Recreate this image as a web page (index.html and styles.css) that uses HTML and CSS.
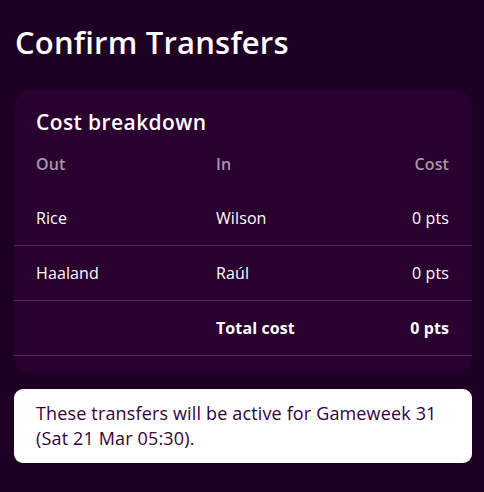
FILE: index.html
```html
<!DOCTYPE html>
<html>
<head>
<meta charset="utf-8">
<link rel="stylesheet" href="styles.css">
</head>
<body>
<main class="page">
  <h1 class="title">Confirm Transfers</h1>
  <section class="card">
    <h2 class="card-title">Cost breakdown</h2>
    <div class="row head">
      <span>Out</span><span>In</span><span class="cost">Cost</span>
    </div>
    <div class="row line">
      <span>Rice</span><span>Wilson</span><span class="cost">0 pts</span>
    </div>
    <div class="row line">
      <span>Haaland</span><span>Raúl</span><span class="cost">0 pts</span>
    </div>
    <div class="row line total">
      <span></span><span>Total cost</span><span class="cost">0 pts</span>
    </div>
  </section>
  <p class="notice">These transfers will be active for Gameweek 31 (Sat 21 Mar 05:30).</p>
</main>
</body>
</html>
```
FILE: styles.css
```css
html, body {
  margin: 0;
  background: #1e0024;
}
body {
  font-family: "Open Sans", "Noto Sans", sans-serif;
  color: #ffffff;
}
.page {
  padding: 22px 12px 0 14px;
  display: flex;
  flex-direction: column;
}
.title {
  margin: 0 0 0 1px;
  font-size: 31px;
  font-weight: 600;
  line-height: 40px;
  letter-spacing: 0.2px;
}
.card {
  margin-top: 28px;
  background: #29002f;
  border-radius: 18px;
  padding: 18px 0 17px;
}
.card-title {
  margin: 0 0 0 22px;
  font-size: 21px;
  font-weight: 600;
  line-height: 28px;
  letter-spacing: 0.4px;
}
.row {
  display: grid;
  grid-template-columns: 180px 1fr auto;
  align-items: center;
  height: 55px;
  padding: 0 23px 0 22px;
  font-size: 16px;
  letter-spacing: 0.1px;
  box-sizing: border-box;
  border-bottom: 1px solid #55245f;
}
.row.head {
  height: 55px;
  border-bottom: none;
  color: #a895ab;
  font-weight: 600;
}
.row.total {
  font-weight: 700;
}
.cost {
  text-align: right;
}
.notice {
  margin: 16px 0 0;
  background: #ffffff;
  color: #37003c;
  border-radius: 9px;
  padding: 12px 22px;
  font-size: 18px;
  line-height: 25px;
  letter-spacing: 0.15px;
}
```
